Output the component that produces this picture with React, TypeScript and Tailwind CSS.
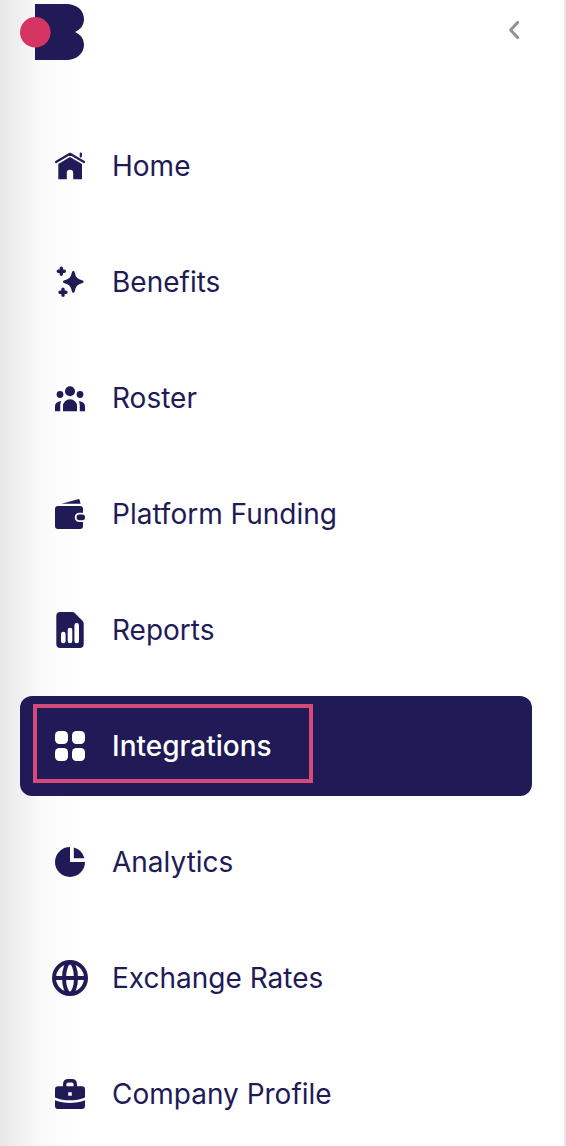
import { useState, type ReactNode } from 'react';
import clsx from 'clsx';

type NavItem = {
  label: string;
  icon: ReactNode;
};

const NAV_ITEMS: NavItem[] = [
  {
    label: 'Home',
    icon: (
      <>
        <path d="M4 14 18 5.8 32 14M28.8 5.5V8.4" fill="none" stroke="currentColor" strokeWidth="2.2" strokeLinecap="round" strokeLinejoin="round" />
        <path d="M18 9 30 16V31.3H21.2V25a3.2 3.2 0 0 0-6.4 0V31.3H6.3V16Z" />
      </>
    ),
  },
  {
    label: 'Benefits',
    icon: (
      <>
        <path
          d="M21.3 8.2C22.6 14.2 24.4 16.4 30.3 17.8 24.4 19.2 22.6 21.6 21.3 27.4 20 21.6 18.2 19.2 12.3 17.8 18.2 16.4 20 14.2 21.3 8.2Z"
          stroke="currentColor"
          strokeWidth="2.6"
          strokeLinejoin="round"
        />
        <path
          d="M9.3 4.3V10.3M6.3 7.3H12.3M11 25.3V31.3M8 28.3H14"
          fill="none"
          stroke="currentColor"
          strokeWidth="3.4"
          strokeLinecap="round"
        />
      </>
    ),
  },
  {
    label: 'Roster',
    icon: (
      <>
        <circle cx="18" cy="11.2" r="5" />
        <circle cx="8" cy="14.5" r="3.4" />
        <circle cx="28" cy="14.5" r="3.4" />
        <path d="M11 31.2V26.3a7 7 0 0 1 14 0V31.2Z" />
        <path d="M3 31.2V26.6C3 23.6 5.2 21.3 9.2 21.3 8.4 23 8.2 24.6 8.2 26.4V31.2Z" />
        <path d="M33 31.2V26.6C33 23.6 30.8 21.3 26.8 21.3 27.6 23 27.8 24.6 27.8 26.4V31.2Z" />
      </>
    ),
  },
  {
    label: 'Platform Funding',
    icon: (
      <>
        <path d="M9.5 7.8 26 3.2Q27.4 2.8 27.7 4.2L28.6 7.8Z" />
        <path d="M6 10H28a3 3 0 0 1 3 3V16.7H27.4a4.7 4.7 0 0 0 0 9.4H31V30a3 3 0 0 1-3 3H6a3 3 0 0 1-3-3V13a3 3 0 0 1 3-3Z" />
        <rect x="24.6" y="18.6" width="8.4" height="5.6" rx="2.6" />
      </>
    ),
  },
  {
    label: 'Reports',
    icon: (
      <path
        fillRule="evenodd"
        d="M8.3 0H20.2Q21.8 0 23 1.2L30.5 8.7Q31.7 9.9 31.7 11.5V32a4 4 0 0 1-4 4H8.3a4 4 0 0 1-4-4V4a4 4 0 0 1 4-4ZM9 22V29a2.3 2.3 0 0 0 4.6 0V22a2.3 2.3 0 0 0-4.6 0ZM15.7 18V29a2.3 2.3 0 0 0 4.6 0V18a2.3 2.3 0 0 0-4.6 0ZM22.4 13.3V29a2.3 2.3 0 0 0 4.6 0V13.3a2.3 2.3 0 0 0-4.6 0Z"
      />
    ),
  },
  {
    label: 'Integrations',
    icon: (
      <>
        <rect x="3" y="3" width="13" height="13" rx="4.4" />
        <rect x="20" y="3" width="13" height="13" rx="4.4" />
        <rect x="3" y="20" width="13" height="13" rx="4.4" />
        <rect x="20" y="20" width="13" height="13" rx="4.4" />
      </>
    ),
  },
  {
    label: 'Analytics',
    icon: (
      <>
        <path d="M18 3V18H33A15 15 0 1 1 18 3Z" />
        <path d="M21.8 3.6A15 15 0 0 1 32.4 14.2H21.8Z" />
      </>
    ),
  },
  {
    label: 'Exchange Rates',
    icon: (
      <g fill="none" stroke="currentColor" strokeWidth="4">
        <circle cx="18" cy="18" r="16" />
        <ellipse cx="18" cy="18" rx="6" ry="15.6" />
        <path d="M2 18H34" />
      </g>
    ),
  },
  {
    label: 'Company Profile',
    icon: (
      <>
        <path d="M12.7 12V8.2Q12.7 4.7 16.2 4.7H19.8Q23.3 4.7 23.3 8.2V12" fill="none" stroke="currentColor" strokeWidth="3.4" />
        <path
          fillRule="evenodd"
          d="M6 10.3H30a3 3 0 0 1 3 3V21.4C24 25.2 12 25.2 3 21.4V13.3a3 3 0 0 1 3-3ZM16.2 16.2V19.8H19.8V16.2Z"
        />
        <path d="M3 24.2C12 27.8 24 27.8 33 24.2V30a3 3 0 0 1-3 3H6a3 3 0 0 1-3-3Z" />
      </>
    ),
  },
];

function Logo() {
  return (
    <svg viewBox="0 0 64 56" className="h-14 w-16" role="img" aria-label="Logo">
      <path d="M15 0H46C57 0 64 6.6 64 15.2 64 21 60.5 25.6 55 28 60.5 30.4 64 35 64 40.8 64 49.4 57 56 46 56H15Z" fill="#201b57" />
      <circle cx="15.3" cy="28.2" r="15.3" fill="#d63462" />
    </svg>
  );
}

export default function App() {
  const [active, setActive] = useState('Integrations');

  return (
    <aside className="min-h-screen border-r-2 border-[#e3e7ec] bg-white bg-linear-to-r from-[#e7e7e7] via-[#fafafa] via-[40px] to-white to-[88px] pt-1 pr-8 pl-5 font-['Inter','Liberation_Sans',sans-serif] text-[#201b57]">
      <header className="mb-14 flex items-start justify-between">
        <Logo />
        <button type="button" aria-label="Collapse menu" className="flex h-13 w-9 cursor-pointer items-center justify-center text-[#929399]">
          <svg viewBox="0 0 12 20" className="h-5 w-3" fill="none" stroke="currentColor" strokeWidth="3">
            <path d="M9.6 2.4 2.6 10 9.6 17.6" strokeLinecap="round" strokeLinejoin="round" />
          </svg>
        </button>
      </header>

      <nav>
        <ul className="flex flex-col gap-4">
          {NAV_ITEMS.map((item) => {
            const isActive = item.label === active;
            return (
              <li key={item.label}>
                <a
                  href="#"
                  onClick={() => setActive(item.label)}
                  aria-current={isActive ? 'page' : undefined}
                  className={clsx(
                    'relative flex h-25 items-center gap-6 rounded-xl px-8 text-[28px] leading-9',
                    isActive && 'bg-[#201b57] font-medium text-white'
                  )}
                >
                  <svg viewBox="0 0 36 36" className="size-9 shrink-0" fill="currentColor" aria-hidden="true">
                    {item.icon}
                  </svg>
                  <span>{item.label}</span>
                  {isActive && <span className="pointer-events-none absolute top-2 left-[13px] h-[79px] w-70 border-4 border-[#d64a7a]" />}
                </a>
              </li>
            );
          })}
        </ul>
      </nav>
    </aside>
  );
}
